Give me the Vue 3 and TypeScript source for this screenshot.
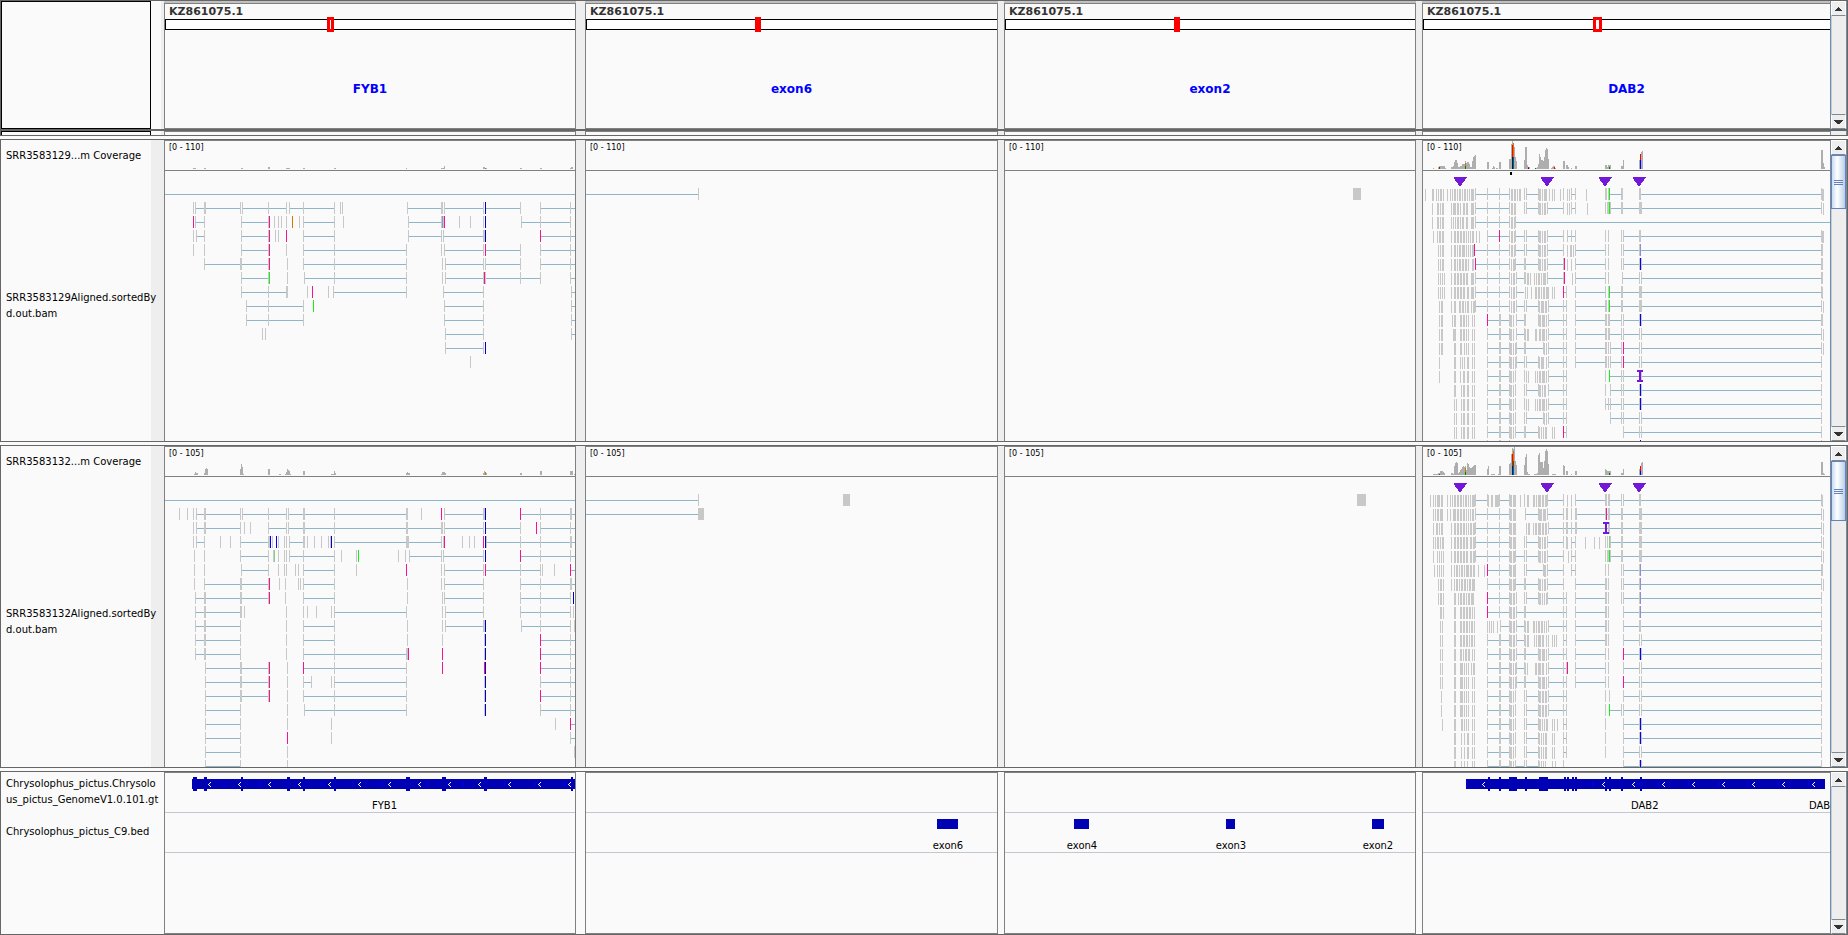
<script setup lang="ts">
interface Mark { x: number; w: number; fill: string; y: number; h: number }
interface Panel { origin: number; rows: string[]; coverage: string; inserts?: number[]; gaps?: [number, number][] }
interface Section { range: string; coverageLabel: string; lines: string[]; height: number; thumb: number; panels: Panel[] }
interface Feature { x: number; w: number }

const ROW = 14
const TOP = 17
const palette: Record<string, string> = {
  p: '#f4158e', b: '#0000c8', B: '#0000ff', n: '#14f014', N: '#84d084', o: '#d07800',
  v: '#9090cc', r: '#ff0000', g: '#008000',
}

function colorOf(code: string, fallback: string): string {
  return palette[code] ?? fallback
}

// A row holds "from~to" introns and "[color]x[+width]" blocks; blocks after "|" sit one pixel lower.
function readMarks(rows: string[]): Mark[] {
  const lines: Mark[] = []
  const blocks: Mark[] = []
  rows.forEach((row, i) => {
    row.split('|').forEach((part, low) => {
      for (const token of part.trim().split(/\s+/)) {
        if (!token) continue
        if (token.includes('~')) {
          const [a, b] = token.split('~').map(Number)
          lines.push({ x: a, w: b - a, y: TOP + i * ROW + 6, h: 1, fill: '#8fb5c8' })
          continue
        }
        const m = /^([a-zA-Z]?)(\d+)(?:\+(\d+))?$/.exec(token)
        if (m) blocks.push({ x: +m[2], w: +(m[3] ?? 1), y: TOP + i * ROW + low, h: 12, fill: colorOf(m[1], '#c8c8c8') })
      }
    })
  })
  return [...lines, ...blocks]
}

// Coverage tokens are "[color]x[+width]=height", later ones drawn on top.
function coverageMarks(text: string): Mark[] {
  const out: Mark[] = []
  for (const token of text.split(/\s+/)) {
    const m = /^([a-zA-Z]?)(\d+)(?:\+(\d+))?=(\d+)$/.exec(token)
    if (m) out.push({ x: +m[2], w: +(m[3] ?? 1), y: 28 - +m[4], h: +m[4], fill: colorOf(m[1], '#aeaeae') })
  }
  return out
}

const insertionColumns = [51, 138, 196, 230]

const sections: Section[] = [
  {
    range: '[0 - 110]',
    coverageLabel: 'SRR3583129...m Coverage',
    lines: ['SRR3583129Aligned.sortedBy', 'd.out.bam'],
    height: 270,
    thumb: 54,
    panels: [
      {
        origin: 5,
        coverage: '33+3=1 44+2=1 81+2=1 108+2=2 126+4=1 143+2=1 174+2=1 246=1 281+3=1 284=3 323+2=2 325+2=1 o325=1 360+2=1 380+2=1 410=1 411+2=2',
        rows: [
          '5~415',
          '35~80 82~126 129~174 247~281 284~323 325~360 380~415 33 35 44+2 80 82 108 126 129 143 174 180 182 247 281+2 284 323 b325 360 380 410',
          '35~44 81~108 143~174 248~281 361~410 p33 35 44 81 108 p109 114 118 121 126 o132 139 143 174 183 248 281+3 v282 p284 299 310 323 b325 361 380 410',
          '36~44 81~108 143~174 248~281 283~323 380~415 33 36 44 81 108 p109 115 118 p126 143 174 248 281 283 323+2 b325 p380 410',
          '81~108 143~246 284~323 325~360 380~415 33 44 81 108 p109 126 143 174 246 281 284 323 p325 360 380 410',
          '44~80 81~108 143~246 285~323 325~360 380~415 44 80+2 108 p109 127 143 174 246 282 285 323 325 360 380 410',
          '81~108 144~246 285~323 325~380 410~415 81 108 n109 127 144 174 246 282 285 323+3 p324 360 380 410',
          '81~126 173~246 283~323 411~415 81 108 126+2 147 p152 168 173 246 283 323 411',
          '86~143 284~323 411~415 86 108 143 n153 284 323 411',
          '86~143 284~323 411~415 86 108 143 284 323 411',
          '285~323 411~415 102 105 285 323 411',
          '285~323 285 323 b325',
          '310',
        ],
      },
      { origin: 6, coverage: '', rows: ['6~118 118'] },
      { origin: 5, coverage: '', rows: ['353+8'] },
      {
        origin: 13,
        coverage: '23=1 28=2 29+6=3 35=1 41+2=2 43=3 44=7 45+2=9 47=6 48+2=2 50+2=3 52+2=5 54=5 55=8 56=6 57+2=7 59=5 60+2=2 62=8 63=12 64=13 65=14 77+2=7 82=1 83=3 84=2 86+2=1 89+2=7 99+2=10 101=25 102=28 103=26 104=22 105=12 106=8 114=9 115+2=22 117=4 118+2=2 125+2=1 127=2 128=5 129=15 130=12 131+2=9 133=8 134=12 135=19 136=21 137=20 138=10 141=1 142=2 143+2=3 145=1 153+2=8 156+2=4 158=2 161=1 165+2=3 195+2=4 197=2 198+3=4 211+2=3 213=9 229=9 230=15 231=17 232=18 411+2=19 413=6 414=2 r29=2 g29=1 o55=6 g55=3 r102=24 b102=12 o103=26 g103=12 r118=2 B118=1 g125=1 r144=2 g199=2 r230=15 B230=9',
        inserts: insertionColumns,
        gaps: [[229, 13]],
        rows: [
          '65~99 116~128 162~165 200~211 231~411 65 77 89 99 114 116 128 153 161 165 195+2 198 n199 211+2 229+2 411 | 15 22+2 26 28+1 30+2 33 37 40 42 44+2 47 49+2 52 54+2 57 59+1 61+3 101+2 104+2 107 109+2 129+2 132 134+3 139 142 144 150 157 159 176 412+2',
          '65~99 116~128 137~153 161~165 200~229 231~411 65 77 89 99 114+1 116 128 137 153 161 165 195 197+2 n199 200 211+2 229+3 411 | 22 27+2 30 32+2 41 43+3 47+2 50 53+2 56+2 61+3 101+2 104+2 129+2 132 134+2 157 159 177 413',
          '65~99 106~420 65 77 89 99 105 | 22 27+2 30 32+2 41 43 45 47+2 50 52+2 56+2 61+3 101+2 104',
          '77~99 105~114 116~128 137~153 157~165 213~229 231~411 77 p89 99 105 114 116 128 137 153 157 161 165 195 198 211 213 229+2 411 | 23 27 29+2 32+2 41 44+2 47+2 50+2 53+2 56 58 60 62+2 66 69 101+2 104 129+2 132 134+2 412+2',
          '65~99 105~114 116~128 137~153 165~195 213~229 231~411 p64 77 89 99 105 114 116 128 137 153 165 195 198 211 213 229 v230 411+2 | 28 30 32+2 41 44+2 47 49+2 52+3 56 58 60 62+2 101+2 104 129+2 132 134+2 157 160+2 163',
          '65~99 105~114 116~128 137~153 165~195 213~229 231~411 p65 77 89 99 105 114+2 128 137 153 p154 165 195 198 211 213 229 B230 231 411+2 | 28 30 32+2 41 44+2 47 49+2 52+2 55+2 58 62+2 101 103+2 129+2 132 134+2 157 161',
          '65~99 106~114 137~153 165~195 213~229 231~411 65 77 89 99 106 114+2 137 153 p154 165 195 198 212 229 231 411+2 | 28 30 32 34 41 44+2 47+2 50+2 53+2 56+2 61+3 101 103+2 117 118 120 124 126 128+2 131 133+3 162',
          '65~99 106~114 154~156 165~195 200~229 231~411 65 77 89 99 106 p153 156 165 195 198 n199 211+2 229+3 411 | 28 30 32 34 41 44+2 47+2 50+2 53+2 57+2 61+3 101 103+2 115+1 117+1 121 125+2 128+2 131 133+2 136+3 142 144 412+1',
          '65~99 106~114 116~128 138~156 165~195 200~229 231~411 65 77 89 99 106 114 116 128 138 153 156 165 195+2 198 n199 211+2 229+3 411 | 29 31+2 41 44+2 49+2 52+2 55 57+2 61 63+2 101 103+2 129 131+3 135+2 413',
          '77~99 106~114 138~156 165~195 200~211 213~229 231~411 p77 89+2 99 106 114+2 128 138 153 156 165 195+2 198+2 211 213 229 B230 231 411+2 | 29 31+2 42 44+2 50+2 53+2 56 58 62 64 100+2 103+1 129+2 132+3 136',
          '77~99 106~114 138~156 165~195 200~211 213~229 231~411 77 89+2 99 106 114 138 153 156 165 195+2 198+2 211 213 229 231 411 | 29 31+2 43+3 50+2 53+2 56 58 62 64 100+2 103 115 117+2 125+2 129+2 132+3 136 413',
          '77~99 106~114 116~133 138~156 165~195 200~211 213~229 231~411 77 89+2 99 106 114+2 133 138 153 156 165 195+2 198 200 211 p213 229 231 411 | 29 31+2 44+2 50+2 54 56 58 62 64 100+2 103 105 134 136 413',
          '77~99 106~114 116~128 138~156 165~195 200~211 213~229 231~411 77 89+2 99 106 114 116 128 138 153 156 165 195+2 198 200 211 p213 229 231 411 | 29 44+2 50 52 54 57+2 62 64 100+2 103 105 129 131+3 136',
          '77~99 138~156 200~229 231~411 77 89+2 99 105 114 138 153 156 195 n199 211 213 N230 231 411 | 29 44+2 50 53+2 57+2 62 64 100+2 103 116 118 125 127 129+2 132+3 136',
          '77~99 116~128 138~156 200~229 231~411 77 89+2 99 105 114 116 128 138 153 156 195 200 211 213 229 B230 231 411 | 44+2 51 53+2 57+2 62 64 100+2 103 129+2 132 134+2',
          '77~99 138~156 195~211 213~229 231~411 77 89+2 99 105 114 138 153 156 195 198 200 211 213 229 B230 231 411 | 44 46 51 53+2 57+2 62 64 100+2 103 116 118 125 127 129+2 132+3 136',
          '77~99 116~133 138~156 200~229 231~411 77 89+2 99 105 114 116 133 138 153 156 200 211 213 229 231 411 | 44 46 51 53+2 57+2 62 64 100+2 103 134 136',
          '77~99 105~114 116~128 154~156 213~411 77 89+2 99 105 114+2 128 p153 156 213 229 231 411 | 44 46 51 53+2 57+2 62 64 100+2 103 129 131 133 135+2 142 144',
          '77~99 213~411 77 89+2 99 B230 411 | 44 53 62',
        ],
      },
    ],
  },
  {
    range: '[0 - 105]',
    coverageLabel: 'SRR3583132...m Coverage',
    lines: ['SRR3583132Aligned.sortedBy', 'd.out.bam'],
    height: 290,
    thumb: 60,
    panels: [
      {
        origin: 5,
        coverage: '34=1 35=3 36+2=2 44=2 45=6 46=7 47=6 80=6 81=11 82=8 83=1 108+2=6 119+2=1 125=1 126=3 127=6 128=5 129=4 130=1 143+2=4 171+3=1 174=4 175=2 246=2 247=3 248+2=2 281=1 282+3=3 285=2 323=2 324=4 325+2=2 o325=3 360+2=2 380+2=4 410+3=4 414=1',
        rows: [
          '5~415',
          '36~80 82~126 128~246 284~323 360~415 19 27 33 36 44+2 80 82 108 126 128 143+2 174 246+2 261 p281 284 323+2 b325 p360 380 410+2',
          '36~80 108~126 128~281 284~323 325~360 380~415 33 36 44+2 80 84 90 108 126 128 143+2 174 246+2 281+2 284 323 b325 360 p376 380 410',
          '36~44 80~108 129~143 174~246 248~281 326~415 33 36 44 60 70 80 108+2 B110 112 B116 118 124 126 129 143+2 147 154 161 168 170 b171 174 246+2 248 281 283 p284 302 309 314 p323 b325 326 360 380 410+2',
          '80~108 129~174 249~281 283~323 360~415 34 44 80 108 113 N114 118 124 126 129 143 174 181 196 n198 238 245 249 281 283 323 b325 p360 380 410',
          '81~108 143~174 284~323 325~380 411~415 34 44 81 108 118 124 126 135 138 143 174 196 p246 281 284 323 p325 360 380 382 394 p410',
          '44~108 143~174 284~323 360~415 34 44 80+2 108 p109 119 125 138 140 143 174 247 281 284 323 360 380 410+2',
          '35~108 143~174 284~323 360~410 35 44+2 80+2 108 p109 125 143 174 247 282 284 323 360 380 410 b413',
          '35~80 174~246 285~323 360~410 35 44+2 80+2 84 126 143 147 156 171 174 246 282 285 323 360 380 410 413',
          '35~80 143~174 285~323 361~410 35 44+2 80 126 143 174 247 282 285 323 324 b325 361 380 410 414',
          '35~80 143~174 380~415 35 44+2 80 126 143 174 247 282 324 b325 p380 410',
          '35~80 143~246 380~415 35 44+2 80 126 143 174 246+2 p248 p282 324 b325 p380 410',
          '45~108 143~246 380~415 45 80+2 108 p109 127 p143 174 246 p282 p324 b325 p380 410',
          '45~108 143~151 174~246 380~415 45 80+2 108 p109 127 143 151 171 174 246 324 b325 380 410',
          '45~108 143~246 380~415 45 80+2 108 p109 127 143 174 246 324 b325 p380 410',
          '45~80 144~246 380~415 45 80 127 144 174 246 324 b325 380 410',
          '45~80 411~415 45 80 127 171 395 p410',
          '45~80 411~415 45 80 p127 171 410',
          '45~80 45 80 127 414',
          '45~80 45 80 127',
        ],
      },
      { origin: 6, coverage: '', rows: ['6~118 118 263+7', '6~118 118+6'] },
      { origin: 5, coverage: '', rows: ['357+9'] },
      {
        origin: 13,
        coverage: '23+5=1 28+2=2 30+3=4 33=3 34=2 41+2=2 43=1 44=9 45=12 46=13 47=12 48=2 49=3 50=5 51=6 52=8 53=9 54=8 55=9 56=5 57=12 58=11 59=8 60+2=7 62=8 63=9 64+2=10 77=6 78=9 81+4=1 88=1 89+2=9 99=11 100=12 101=21 102=27 103=26 104=28 105=14 106=10 114=10 115=18 116=21 117=3 118+2=1 124+4=1 127=2 128=20 129=22 130+3=13 133=7 134=14 135=24 136=26 137=24 138=11 142+4=1 153=10 154=9 156+2=4 161=1 165+2=4 195=6 196=5 197+4=4 211+2=2 213=6 229=6 230=9 231=12 232=13 411+2=13 413=2 414=1 g29=1 o55=7 g55=3 r102=21 B102=9 o103=24 g103=14 g199=2 r230=9 B230=4',
        inserts: insertionColumns,
        gaps: [[195, 2]],
        rows: [
          '65~77 90~99 137~153 165~195 199~211 213~229 231~411 65 77 89 99 114 137 153 165 195+2 198+2 211 213 229+2 411 | 20 23 25 27+3 31+2 37 40 42 44+2 47+2 50+2 53 55+2 58 60 62+3 78 81+2 85+3 88 100+2 103+3 110 114+1 117+2 123+2 126 128+3 132+2 135+2 157 161 412',
          '65~99 115~128 137~153 165~229 231~411 65 77 89 99 115 128 137 153 156+2 161 165+2 195 p196 198+2 211+2 229+3 411 | 23 25 27+2 30+3 37 40 43+3 47+2 50+2 53+2 56+1 58 60 62+2 100+2 103+3 129+3 133+3 413',
          '65~99 138~229 231~411 65 77 89 99 138 153 156+2 161 165+2 198+2 211+2 229+3 411 | 23 26+2 29 31+2 41 44+2 47+2 50+2 53+2 56 58 60+2 63+2 100+2 103+3 116 118 119 123+1 125+2 128+3 132+2 135+2 413',
          '65~99 116~128 137~153 162~165 199~229 231~411 65 77 89 99 114 116 128 137 153 156 165 195 197 N199 200 211+2 229+3 411 | 23 25 27+2 30 32+2 41 44+2 47+2 50+2 53+2 56+2 60+2 63+2 100+2 103+3 129+2 132 134+2 156 157 161 175 184 189 413',
          '65~99 105~114 116~128 137~153 162~165 200~229 231~411 65 77 89 99 105 114 116 128 137 153 161 165 195 197+2 n199 200 211+2 229+3 411 | 23 27 29 31 33 41 44+2 47+2 50+2 53+2 56+2 60+2 63+2 100+2 103+2 129+2 132 134+2 158 413',
          '77~99 116~133 137~153 162~165 213~229 231~411 p77 89 99 105 114 116 133 137 153 161 165 195 198 211 213 229 v230 411+2 | 24 27 29 31 33 41 44 46+2 49 51+2 54 56+3 60+2 63+2 68 74 100+2 103+3 134+2',
          '77~99 105~114 116~128 137~153 165~195 213~229 231~411 77 89 99 105 114+2 128 137 153 165 195+2 198 211 213 229 v230 411 | 28 30+2 33 41 44 46+2 49 51+2 54+2 57 59+2 62+3 100+2 103+2 129+2 132 134+2 413',
          '77~99 116~128 137~156 165~195 213~229 231~411 p77 89 99 106 114 116 128 137 153 156 165 195+2 198 211 213 229 v230 411 | 28 30+2 33 44+2 48 50+2 53+2 56+1 58+2 61+3 100+2 103+2 129+2 132 134 136',
          '77~99 106~114 115~156 165~195 213~229 231~411 p77 89 99 106 114+2 153 156 165 195+2 198 213 229 v230 411 | 30+2 33 44+2 50+2 53+2 56+2 59+2 62 64 100+2 103+2',
          '90~99 106~114 138~156 165~195 213~229 231~411 90 99 106 114 138 153 156 165 195+2 198 213 229+2 411 | 30 32 44+2 50+2 53+2 56+2 59 61+2 64 77 79 81 83 87 100+2 103+2 115 117+2 123+2 126 128+2 131+2 134 136',
          '77~99 106~114 154~156 165~195 213~229 231~411 77 89+2 99 106 114 153 156 165 195+2 198 213 229 231 411 | 30 32 44+2 50+2 53+2 56+2 59 61+2 64 100+2 103+2 115 117+2 124 126 128+3 132+2 136 138 142 144 146',
          '77~99 106~114 116~128 138~156 165~195 213~229 231~411 77 89+2 99 106 114+2 128 138 153 156 165 195 198 p213 229 B230 231 411 | 30 32 44+2 50+2 53+1 55+2 58+2 62 64 100+2 103+2 129+2 132+3 136',
          '77~99 106~114 138~156 165~195 213~229 231~411 77 89+2 99 106 114 138 153 156 p157 165 195 198 213 229 231 411 | 30 32 44+2 50+3 54 56 58 61+1 63+2 100+2 103 105 115 117 125+2 128+3 132+2 136',
          '77~99 106~128 138~156 165~195 213~229 231~411 77 89+2 99 106 114+2 128 138 153 156 165 195 198 p213 229 231 411 | 30 32 44+2 50+3 54 56 58 62 64 100+2 103 105 129+2 132+3 136',
          '77~99 116~128 138~156 213~229 231~411 77 89+2 99 105 114 116 128 138 153 156 195 199 213 229 231 411 | 31 44+2 50+3 54 56 58 62 64 100+2 103 129+2 132+2 135+2',
          '77~99 116~128 138~156 199~211 213~229 231~411 77 89+2 99 105 114 116 128 138 153 156 195 n199 211 213 229 231 411 | 31 44+2 50+3 54 56 58 62 64 100+2 103 129+2 132+2 135+2',
          '77~99 116~128 154~156 213~229 231~411 77 89+2 99 105 114 116 128 153 156 195 213 229 B230 231 411 | 32 44+2 51+2 54 56 58 62 64 100+2 103 129+2 132 134 136+2 142 144 147',
          '77~99 116~128 154~156 213~229 231~411 77 89+2 99 105 114 116 128 153 156 195 213 229 B230 231 411 | 44+2 51 54 57+2 62 64 100+2 103 129+1 131 133 135+2 142 144',
          '77~99 116~128 154~156 213~229 231~411 77 89+2 99 105 114 116 128 153 156 195 213 229 231 411 | 44+2 51 54 57+2 62 64 100+2 103 129+1 131 133 135+2 142 144',
          '77~99 105~114 116~128 213~229 231~411 77 89+2 99 105 114 116 128 153 213 229 B230 231 411 | 44+2 51 54 57 62 64 100+2 103 129 131 133 135 142 145',
        ],
      },
    ],
  },
]

const loci = [
  { chr: 'KZ861075.1', name: 'FYB1', left: 161, width: 7 },
  { chr: 'KZ861075.1', name: 'exon6', left: 168, width: 5 },
  { chr: 'KZ861075.1', name: 'exon2', left: 168, width: 5 },
  { chr: 'KZ861075.1', name: 'DAB2', left: 169, width: 9 },
]

const spans = (text: string): Feature[] => text.split(' ').filter(Boolean).map((t) => {
  const [x, w] = t.split('+').map(Number)
  return { x, w }
})
const numbers = (text: string): number[] => text.split(' ').filter(Boolean).map(Number)

const annotations = [
  {
    origin: 5,
    gene: spans('32+383'),
    exons: spans('33+4 44+3 81+2 127+3 143+2 174+2 246+4 282+4 324+3 411+2'),
    white: numbers('48 78 108 138 168 198 228 258 288 318 348 378 408'),
    blue: numbers('62 97 160 190 220 265 301 343 373 403'),
    names: [{ x: 212, text: 'FYB1' }],
    bed: [],
  },
  { origin: 6, gene: [], exons: [], white: [], blue: [], names: [], bed: [{ x: 357, w: 21, text: 'exon6' }] },
  {
    origin: 5, gene: [], exons: [], white: [], blue: [], names: [],
    bed: [{ x: 74, w: 15, text: 'exon4' }, { x: 226, w: 9, text: 'exon3' }, { x: 372, w: 12, text: 'exon2' }],
  },
  {
    origin: 13,
    gene: spans('56+359'),
    exons: spans('78+2 89+2 99+8 115+2 129+9 154+2 157+2 162+2 165+2 195+2 199+2 211+2 230+2'),
    white: numbers('72 192 222 252 282 312 342 372 402'),
    blue: numbers('181 228 247 277 307 337 367 397'),
    names: [{ x: 221, text: 'DAB2' }, { x: 399, text: 'DAB2' }],
    bed: [],
  },
]
</script>

<template>
  <main class="browser">
    <section class="header-band">
      <div class="row header-row">
        <div class="name-box"><div class="name-inner"></div></div>
        <div v-for="(locus, i) in loci" :key="i" class="panel locus" :class="`panel-${i + 1}`">
          <h2 class="chr">{{ locus.chr }}</h2>
          <div class="ideogram">
            <span class="window" :style="{ left: locus.left + 'px', width: locus.width + 'px' }"></span>
          </div>
          <a class="locus-name" href="#">{{ locus.name }}</a>
        </div>
        <div class="scroll">
          <button type="button" class="arrow" aria-label="Scroll up"><svg width="7" height="4"><path d="M3 0h1v1h1v1h1v1h1v1H0V3h1V2h1V1h1z" /></svg></button>
          <div class="rail"></div>
          <button type="button" class="arrow" aria-label="Scroll down"><svg width="9" height="4"><path d="M0 0h9v1H8v1H7v1H6v1H3V3H2V2H1V1H0z" /></svg></button>
        </div>
      </div>
      <div class="row sliver">
        <div class="name-box"><div class="name-inner"></div></div>
        <div v-for="n in 4" :key="n" class="panel" :class="`panel-${n}`"></div>
        <div class="scroll"></div>
      </div>
    </section>

    <section v-for="section in sections" :key="section.coverageLabel" class="row band">
      <div class="names">
        <div class="name coverage-name">{{ section.coverageLabel }}</div>
        <div class="name read-name">
          <span v-for="line in section.lines" :key="line">{{ line }}</span>
        </div>
      </div>
      <div v-for="(panel, p) in section.panels" :key="p" class="panel" :class="`panel-${p + 1}`">
        <div class="coverage">
          <svg class="track" height="29">
            <g :transform="`translate(${-panel.origin} 0)`">
              <rect v-for="(m, k) in coverageMarks(panel.coverage)" :key="k" :x="m.x" :y="m.y" :width="m.w" :height="m.h" :fill="m.fill" />
            </g>
          </svg>
          <span class="range">{{ section.range }}</span>
        </div>
        <svg class="track" :height="section.height">
          <g :transform="`translate(${-panel.origin} 0)`">
            <rect v-if="panel.inserts && section.height === 270" x="100" y="1" width="2" height="3" fill="#000" />
            <path v-for="x in panel.inserts" :key="'i' + x" :d="`M${x - 6} 6h12v1h-1v1h-1v2h-1v1h-1v1h-1v2h-1v1h-2v-1h-1v-2h-1v-1h-1v-1h-1v-2h-1v-1h-1z`" fill="#7418d8" />
            <rect v-for="(m, k) in readMarks(panel.rows)" :key="k" :x="m.x" :y="m.y" :width="m.w" :height="m.h" :fill="m.fill" />
            <path v-for="g in panel.gaps" :key="'g' + g[0]" :d="`M${g[0] - 2} ${TOP + g[1] * ROW}h6v2h-2v8h2v2h-6v-2h2v-8h-2z`" fill="#7418d8" />
          </g>
        </svg>
      </div>
      <div class="scroll">
        <button type="button" class="arrow" aria-label="Scroll up"><svg width="7" height="4"><path d="M3 0h1v1h1v1h1v1h1v1H0V3h1V2h1V1h1z" /></svg></button>
        <div class="rail">
          <div class="thumb" :style="{ height: section.thumb + 'px' }"><i></i><i></i><i></i></div>
        </div>
        <button type="button" class="arrow" aria-label="Scroll down"><svg width="9" height="4"><path d="M0 0h9v1H8v1H7v1H6v1H3V3H2V2H1V1H0z" /></svg></button>
      </div>
    </section>

    <section class="row band features">
      <div class="names">
        <div class="name feature-name">
          <span>Chrysolophus_pictus.Chrysolo</span>
          <span>us_pictus_GenomeV1.0.101.gt</span>
        </div>
        <div class="name feature-name"><span>Chrysolophus_pictus_C9.bed</span></div>
      </div>
      <div v-for="(a, p) in annotations" :key="p" class="panel" :class="`panel-${p + 1}`">
        <div class="feature-track">
          <svg class="track" height="39">
            <g :transform="`translate(${-a.origin} 0)`">
              <rect v-for="g in a.gene" :key="g.x" :x="g.x" y="6" :width="g.w" height="10" fill="#0000b4" />
              <rect v-for="e in a.exons" :key="e.x" :x="e.x" y="4" :width="e.w" height="14" fill="#0000b4" />
              <path v-for="x in a.blue" :key="'b' + x" :d="`M${x + 3} 9l-2 2l2 2`" stroke="#0000ff" fill="none" />
              <path v-for="x in a.white" :key="'w' + x" :d="`M${x + 2} 9h1v1h-1zM${x + 1} 10h1v1h-1zM${x} 11h1v1h-1zM${x + 1} 12h1v1h-1zM${x + 2} 13h1v1h-1z`" fill="#fff" />
              <text v-for="n in a.names" :key="n.x" :x="n.x" y="36">{{ n.text }}</text>
            </g>
          </svg>
        </div>
        <div class="feature-track">
          <svg class="track" height="39">
            <g :transform="`translate(${-a.origin} 0)`">
              <template v-for="b in a.bed" :key="b.x">
                <rect :x="b.x" y="6" :width="b.w" height="10" fill="#0000b4" />
                <text :x="b.x + Math.round(b.w / 2)" y="36" text-anchor="middle">{{ b.text }}</text>
              </template>
            </g>
          </svg>
        </div>
      </div>
      <div class="scroll">
        <button type="button" class="arrow" aria-label="Scroll up"><svg width="7" height="4"><path d="M3 0h1v1h1v1h1v1h1v1H0V3h1V2h1V1h1z" /></svg></button>
        <div class="rail"></div>
        <button type="button" class="arrow" aria-label="Scroll down"><svg width="9" height="4"><path d="M0 0h9v1H8v1H7v1H6v1H3V3H2V2H1V1H0z" /></svg></button>
      </div>
    </section>
  </main>
</template>

<style>
body { background: #fafafa; }
</style>

<style scoped>
.browser {
  box-sizing: border-box;
  min-height: 100vh;
  display: flex;
  flex-direction: column;
  gap: 3px;
  background: #fafafa;
  color: #000;
  font-family: "DejaVu Sans", Verdana, sans-serif;
  font-size: 10px;
  line-height: 16px;
}
.row {
  display: grid;
  grid-template-columns: 163px 412fr 9px 413fr 6px 412fr 6px 408fr 17px;
  grid-template-rows: minmax(0, 1fr);
  background: #eee;
}
.header-band, .band {
  border: 1px solid #666;
}
.header-row {
  height: 128px;
}
.panel {
  min-width: 0;
  overflow: hidden;
  background: #fafafa;
  border: 1px solid #808080;
  border-bottom: 0;
}
.panel-1 { grid-column: 2; }
.panel-2 { grid-column: 4; }
.panel-3 { grid-column: 6; }
.panel-4 { grid-column: 8; border-right: 0; }
.name-box {
  margin-right: 3px;
  background: #fafafa;
}
.name-inner {
  box-sizing: border-box;
  width: 150px;
  height: 100%;
  border: 1px solid #000;
}
.locus {
  display: flex;
  flex-direction: column;
  box-shadow: 0 -2px 0 #c0c0c0;
  margin-top: 2px;
  border-bottom: 1px solid #808080;
}
.chr {
  margin: 0 4px;
  height: 15px;
  font-size: 11px;
  line-height: 15px;
  color: #333;
}
.ideogram {
  position: relative;
  box-sizing: border-box;
  height: 11px;
  background: #fff;
  border: 1px solid #000;
  border-right: 0;
}
.window {
  position: absolute;
  top: -3px;
  box-sizing: border-box;
  height: 15px;
  border: 3px solid #f00;
}
.locus-name {
  align-self: center;
  margin-top: 51px;
  font-size: 12px;
  font-weight: bold;
  color: #00f;
  text-decoration: none;
}
.sliver {
  height: 6px;
  box-sizing: border-box;
  border-top: 2px solid #666;
}
.sliver .name-inner { border-bottom: 0; }
.names {
  width: 150px;
  display: flex;
  flex-direction: column;
  background: #fafafa;
}
.name {
  display: flex;
  flex-direction: column;
  justify-content: center;
  padding-left: 5px;
  white-space: nowrap;
}
.coverage-name { height: 31px; }
.read-name { flex: 1; }
.coverage {
  position: relative;
  height: 29px;
  border-bottom: 1px solid #808080;
}
.range {
  position: absolute;
  top: 1px;
  left: 4px;
  font-size: 8px;
  line-height: 11px;
}
.track {
  display: block;
  width: 100%;
  shape-rendering: crispEdges;
}
.features {
  flex: 1;
  background: #fafafa;
}
.features .panel { border-bottom: 1px solid #808080; }
.feature-name { height: 40px; }
.feature-track { border-bottom: 1px solid #c6c6d2; }
.scroll {
  grid-column: 9;
  display: flex;
  flex-direction: column;
  background: #eee;
  border-left: 1px solid #7a8a99;
  border-right: 1px solid #7a8a99;
}
.arrow {
  flex: none;
  height: 15px;
  padding: 0;
  display: flex;
  align-items: center;
  justify-content: center;
  background: #eee;
  border: 1px solid #fff;
  border-bottom: 1px solid #7a8a99;
}
.rail {
  flex: 1;
  border-left: 1px solid #b8cfe5;
}
.rail + .arrow { border-top: 1px solid #7a8a99; }
.arrow path { fill: #333; }
.thumb {
  box-sizing: border-box;
  display: flex;
  flex-direction: column;
  align-items: center;
  justify-content: center;
  gap: 1px;
  margin-left: -1px;
  border: 1px solid #6382bf;
  background: linear-gradient(90deg, #c8ddf2 0%, #fff 40%, #b8cfe5 100%);
}
.thumb i {
  width: 9px;
  height: 1px;
  background: #6382bf;
}
</style>
